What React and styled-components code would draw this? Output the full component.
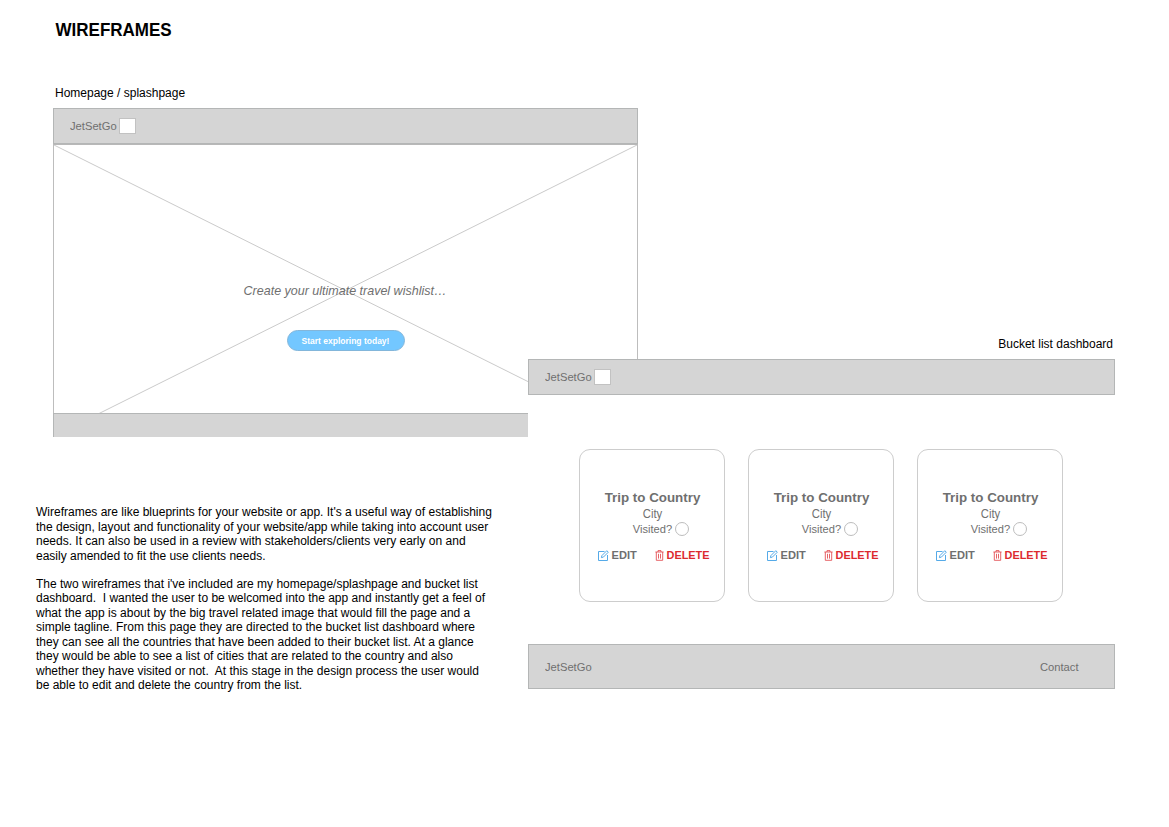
import React from "react";
import styled, { createGlobalStyle } from "styled-components";

const GlobalStyle = createGlobalStyle`
  * { box-sizing: border-box; }
  body { margin: 0; background: #fff; color: #000; font-family: "Liberation Sans", Arial, sans-serif; }
  h1, h2, h3, p { margin: 0; font-weight: 400; }
`;

const Page = styled.main`
  width: 1169px;
  height: 827px;
  display: grid;
  grid-template-columns: 1fr;
  grid-template-rows: 1fr;
  background: #fff;
  overflow: hidden;
`;

const Column = styled.section`
  grid-area: 1 / 1;
  display: flex;
  flex-direction: column;
`;

const LeftColumn = styled(Column)`
  width: 638px;
  padding: 20px 0 0 53px;
`;

const RightColumn = styled(Column)`
  width: 587px;
  margin-left: 528px;
  padding-top: 336px;
  z-index: 1;
`;

const Title = styled.h1`
  margin-left: 2.5px;
  font-size: 17px;
  font-weight: 700;
  line-height: 20px;
  white-space: nowrap;
  transform: scaleY(1.1);
`;

const Caption = styled.h2`
  margin: ${(p) => p.$margin};
  text-align: ${(p) => p.$align || "left"};
  font-size: 12px;
  line-height: 16px;
  transform: scaleY(1.07);
`;

const Notes = styled.div`
  width: 480px;
  margin: 68px 0 0 -17px;
  font-size: 12px;
  line-height: 13.5px;
  transform: scaleY(1.07);
  transform-origin: 0 0;
`;

const Paragraph = styled.p`
  white-space: pre;
  & + & { margin-top: 13.5px; }
`;

const Frame = styled.div`
  display: flex;
  flex-direction: column;
  height: ${(p) => p.$height}px;
  background: #fff;
`;

const Bar = styled.div`
  display: flex;
  flex: none;
  align-items: center;
  height: 36px;
  padding-left: 16px;
  gap: 2px;
  background: #d5d5d5;
  border: 1px solid #b4b6b6;
`;

const Footer = styled(Bar)`
  height: 45px;
  padding: 1px 35.5px 0 16px;
  justify-content: space-between;
`;

const EmptyFooter = styled(Bar)`
  height: 24px;
  border-width: 1px 0 0 1px;
`;

const Brand = styled.span`
  color: #6f6f6f;
  font-size: 11.2px;
  line-height: 14px;
  transform: scaleY(1.05);
`;

const LogoBox = styled.span`
  width: 17px;
  height: 16px;
  background: #fff;
  border: 1px solid #c2c2c2;
`;

const Hero = styled.div`
  display: grid;
  height: 269px;
  overflow: hidden;
  border: 1px solid #bdbdbd;
  border-top-color: #b8b8b8;
  border-bottom: 0;
`;

const Cross = styled.svg`
  grid-area: 1 / 1;
  margin: -1px 0 0 -1px;
`;

const HeroContent = styled.div`
  grid-area: 1 / 1;
  display: flex;
  flex-direction: column;
  align-items: center;
  width: 582px;
  padding-top: 138px;
  z-index: 1;
`;

const Tagline = styled.p`
  color: #6f6f6f;
  font-size: 12.5px;
  font-style: italic;
  line-height: 16px;
  transform: scaleY(1.04);
`;

const StartButton = styled.button`
  width: 118px;
  height: 21px;
  margin: 31px 0 0 1px;
  padding: 1px 0 0;
  border: 1px solid #83b6da;
  border-radius: 11px;
  background: #73c7ff;
  color: #fff;
  font: 700 8.5px/18px "Liberation Sans", Arial, sans-serif;
  white-space: nowrap;
`;

const Cards = styled.div`
  display: flex;
  gap: 23px;
  padding: 54px 0 0 51px;
  height: 250px;
`;

const Card = styled.article`
  display: flex;
  flex-direction: column;
  align-items: center;
  width: 146px;
  height: 153px;
  padding-top: 39px;
  border: 1px solid #cdcdcd;
  border-radius: 11px;
  color: #6f6f6f;
`;

const CardTitle = styled.h3`
  margin-left: 1px;
  font-size: 13.35px;
  font-weight: 700;
  line-height: 18px;
`;

const City = styled.p`
  margin-left: 1px;
  font-size: 11.3px;
  line-height: 15px;
  transform: scaleY(1.05);
`;

const Visited = styled.div`
  display: flex;
  align-items: center;
  gap: 3px;
  margin-left: 18px;
  font-size: 11.1px;
  line-height: 15px;
`;

const Radio = styled.span`
  width: 14px;
  height: 14px;
  margin-top: -1px;
  border: 1px solid #bdbdbd;
  border-radius: 50%;
`;

const Actions = styled.div`
  display: flex;
  justify-content: space-between;
  width: 112px;
  margin: 11px 0 0 3px;
`;

const Action = styled.span`
  display: flex;
  align-items: center;
  gap: ${(p) => p.$gap}px;
  color: ${(p) => p.$color};
  font-size: ${(p) => p.$size}px;
  font-weight: 700;
  line-height: 14px;
`;

const EditIcon = () => (
  <svg width="11" height="11" viewBox="0 0 11 11" fill="none" stroke="#55aae8" strokeWidth="1">
    <path d="M6.5 1.5H.5v9h9V5" />
    <path d="M3.4 7.6l.5-2L8.8.7l1.5 1.5-4.9 4.9z" />
  </svg>
);

const TrashIcon = () => (
  <svg width="9" height="11" viewBox="0 0 9 11" fill="none" stroke="#e2484b" strokeWidth="0.85">
    <path d="M.4 2h8.2M3 2V.6h3V2M1.3 2v8.3h6.4V2M3.5 3.8v4.8M5.5 3.8v4.8" />
  </svg>
);

const HomepageFrame = () => (
  <Frame $height={329}>
    <Bar>
      <Brand>JetSetGo</Brand>
      <LogoBox />
    </Bar>
    <Hero>
      <Cross width="585" height="293" stroke="#c4c4c4" strokeWidth="0.9">
        <line x1="0" y1="0.5" x2="585" y2="292.5" />
        <line x1="585" y1="0.5" x2="0" y2="292.5" />
      </Cross>
      <HeroContent>
        <Tagline>Create your ultimate travel wishlist…</Tagline>
        <StartButton>Start exploring today!</StartButton>
      </HeroContent>
    </Hero>
    <EmptyFooter />
  </Frame>
);

const TripCard = () => (
  <Card>
    <CardTitle>Trip to Country</CardTitle>
    <City>City</City>
    <Visited>
      Visited?
      <Radio />
    </Visited>
    <Actions>
      <Action $color="#6f6f6f" $size={11.1} $gap={3}>
        <EditIcon />
        EDIT
      </Action>
      <Action $color="#dc2a2e" $size={10.9} $gap={3}>
        <TrashIcon />
        DELETE
      </Action>
    </Actions>
  </Card>
);

const DashboardFrame = () => (
  <Frame $height={330}>
    <Bar>
      <Brand>JetSetGo</Brand>
      <LogoBox />
    </Bar>
    <Cards>
      <TripCard />
      <TripCard />
      <TripCard />
    </Cards>
    <Footer>
      <Brand>JetSetGo</Brand>
      <Brand>Contact</Brand>
    </Footer>
  </Frame>
);

const INTRO = `Wireframes are like blueprints for your website or app. It's a useful way of establishing
the design, layout and functionality of your website/app while taking into account user
needs. It can also be used in a review with stakeholders/clients very early on and
easily amended to fit the use clients needs.`;

const DETAILS = `The two wireframes that i've included are my homepage/splashpage and bucket list
dashboard.  I wanted the user to be welcomed into the app and instantly get a feel of
what the app is about by the big travel related image that would fill the page and a
simple tagline. From this page they are directed to the bucket list dashboard where
they can see all the countries that have been added to their bucket list. At a glance
they would be able to see a list of cities that are related to the country and also
whether they have visited or not.  At this stage in the design process the user would
be able to edit and delete the country from the list.`;

export default function App() {
  return (
    <>
      <GlobalStyle />
      <Page>
        <LeftColumn>
          <Title>WIREFRAMES</Title>
          <Caption $margin="45px 0 7px 2px">Homepage / splashpage</Caption>
          <HomepageFrame />
          <Notes>
            <Paragraph>{INTRO}</Paragraph>
            <Paragraph>{DETAILS}</Paragraph>
          </Notes>
        </LeftColumn>
        <RightColumn>
          <Caption $align="right" $margin="0 2px 7px 0">Bucket list dashboard</Caption>
          <DashboardFrame />
        </RightColumn>
      </Page>
    </>
  );
}
